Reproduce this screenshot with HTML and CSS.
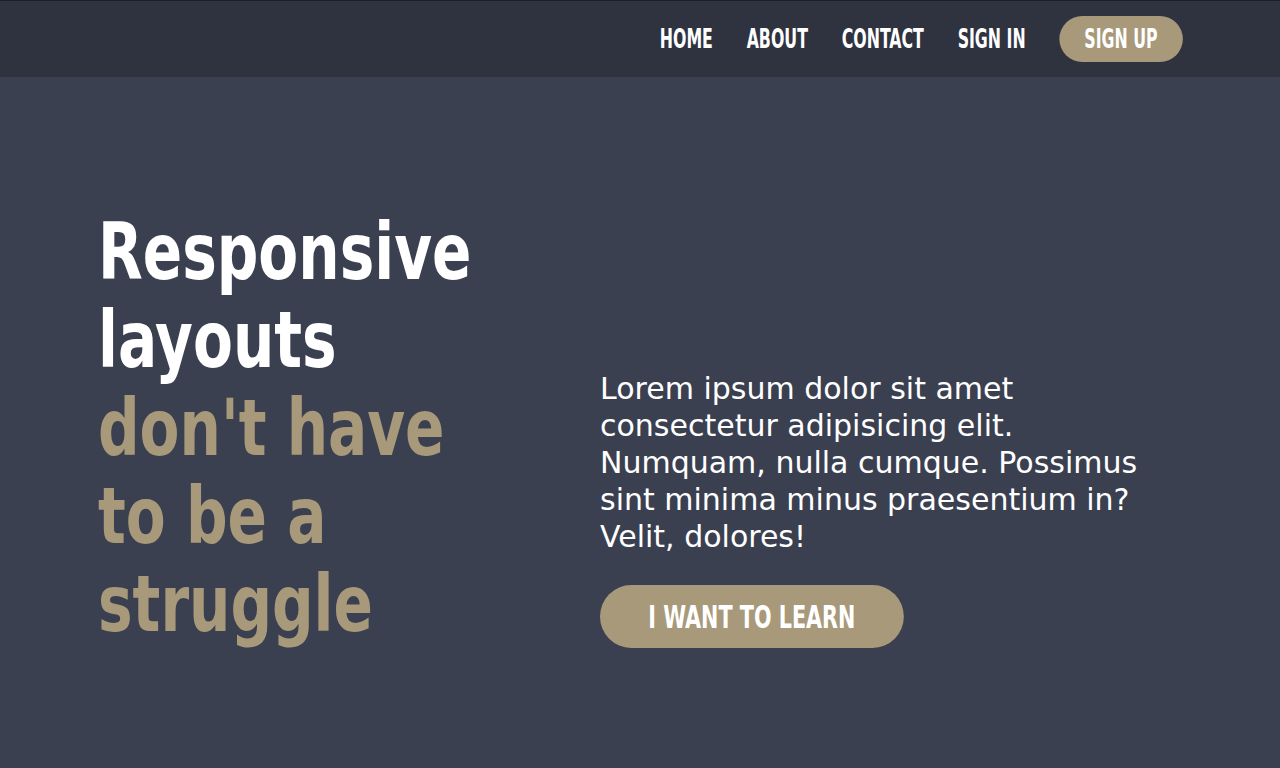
FILE: index.html
```html
<!DOCTYPE html>
<html lang="en">
<head>
<meta charset="utf-8">
<title>Responsive layouts</title>
<link rel="stylesheet" href="styles.css">
</head>
<body>
<header class="site-header">
  <nav class="container nav">
    <ul class="nav-list">
      <li><a class="nav-link" href="#">Home</a></li>
      <li><a class="nav-link" href="#">About</a></li>
      <li><a class="nav-link" href="#">Contact</a></li>
      <li><a class="nav-link" href="#">Sign In</a></li>
      <li><a class="nav-link nav-cta" href="#">Sign Up</a></li>
    </ul>
  </nav>
</header>
<main class="hero">
  <div class="container hero-grid">
    <h1 class="hero-title">Responsive layouts <span class="accent">don't have to be a struggle</span></h1>
    <div class="hero-body">
      <p class="hero-text">Lorem ipsum dolor sit amet consectetur adipisicing elit. Numquam, nulla cumque. Possimus sint minima minus praesentium in? Velit, dolores!</p>
      <a class="btn" href="#">I want to learn</a>
    </div>
  </div>
</main>
</body>
</html>
```
FILE: styles.css
```css
* { box-sizing: border-box; }

html, body {
  margin: 0;
  padding: 0;
}

body {
  background: #3b4051;
  color: #ffffff;
  font-family: "DejaVu Sans", "Open Sans", sans-serif;
}

.container {
  width: 1084px;
  margin: 0 auto;
}

.site-header {
  background: #2f333f;
  height: 77px;
  border-top: 1px solid #1c1f25;
}

.nav {
  height: 100%;
  display: flex;
  justify-content: flex-end;
  align-items: center;
}

.nav-list {
  list-style: none;
  margin: 0 -1px 0 0;
  padding: 0;
  display: flex;
  align-items: center;
  gap: 50px;
  transform: scaleX(0.675);
  transform-origin: right center;
}

.nav-link,
.btn,
.hero-title {
  font-family: "DejaVu Sans Condensed", "DejaVu Sans", sans-serif;
  font-stretch: condensed;
  font-weight: 700;
}

.nav-link {
  display: block;
  color: #ffffff;
  text-decoration: none;
  text-transform: uppercase;
  font-size: 26px;
  line-height: 1;
}

.nav-cta {
  background: #a8997a;
  border-radius: 34px / 23px;
  padding: 0 37px;
  height: 46px;
  display: flex;
  align-items: center;
}

.hero {
  min-height: 691px;
  padding-top: 11px;
  display: flex;
  align-items: center;
}

.hero-grid {
  display: grid;
  grid-template-columns: 502px 1fr;
  align-items: end;
}

.hero-title {
  margin: 0;
  font-size: 78px;
  line-height: 88px;
  width: 460px;
  color: #ffffff;
  transform: scaleX(0.828);
  transform-origin: left top;
}

.accent {
  color: #a8997a;
}

.hero-text {
  margin: 0 0 30px;
  max-width: 560px;
  font-size: 30px;
  line-height: 37px;
  font-weight: 400;
}

.btn {
  display: inline-flex;
  align-items: center;
  justify-content: center;
  height: 63px;
  padding: 0 67px;
  border-radius: 44px / 32px;
  background: #a8997a;
  color: #ffffff;
  text-decoration: none;
  text-transform: uppercase;
  font-size: 32px;
  transform: scaleX(0.72);
  transform-origin: left center;
}
```
